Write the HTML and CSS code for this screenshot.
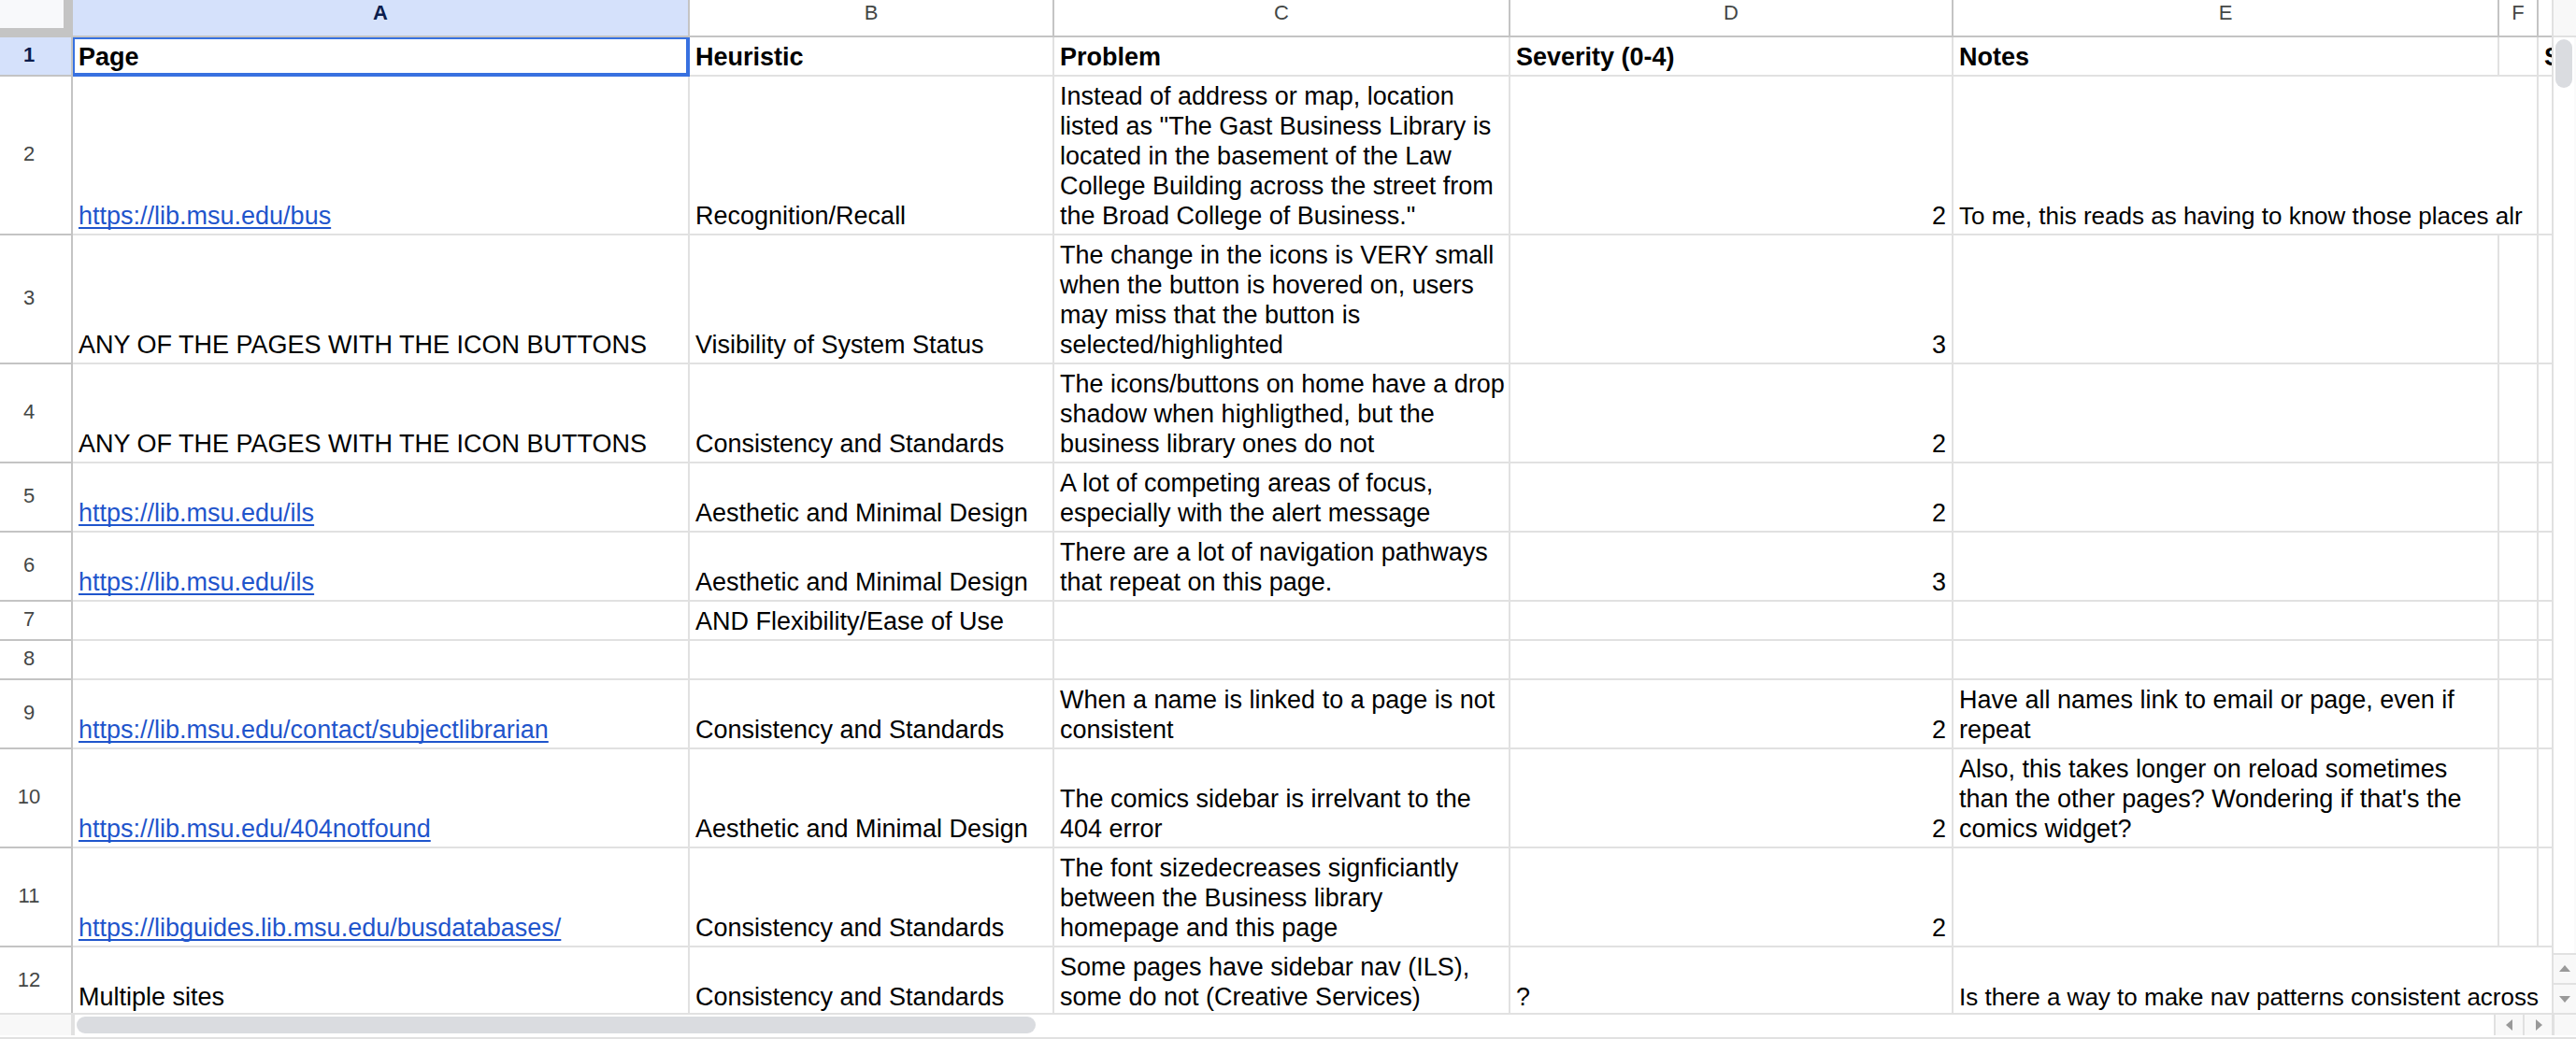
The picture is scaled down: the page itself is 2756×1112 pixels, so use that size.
FILE: index.html
```html
<!DOCTYPE html>
<html lang="en">
<head>
<meta charset="utf-8">
<title>Heuristic evaluation</title>
<link rel="stylesheet" href="styles.css">
</head>
<body>
<div class="app">
  <main class="pane">
    <table class="sheet">
      <colgroup>
        <col class="col-head"><col class="col-a"><col class="col-b"><col class="col-c"><col class="col-d"><col class="col-e"><col class="col-f"><col>
      </colgroup>
      <thead>
        <tr>
          <td class="corner"></td>
          <th scope="col" class="active">A</th>
          <th scope="col">B</th>
          <th scope="col">C</th>
          <th scope="col">D</th>
          <th scope="col">E</th>
          <th scope="col">F</th>
          <th scope="col"></th>
        </tr>
      </thead>
      <tbody>
        <tr class="titles">
          <th scope="row" class="active">1</th>
          <td class="selected">Page</td>
          <td>Heuristic</td>
          <td>Problem</td>
          <td>Severity (0-4)</td>
          <td>Notes</td>
          <td></td>
          <td>S</td>
        </tr>
        <tr>
          <th scope="row">2</th>
          <td><a href="https://lib.msu.edu/bus">https://lib.msu.edu/bus</a></td>
          <td>Recognition/Recall</td>
          <td>Instead of address or map, location listed as "The Gast Business Library is located in the basement of the Law College Building across the street from the Broad College of Business."</td>
          <td class="num">2</td>
          <td colspan="2" class="spill">To me, this reads as having to know those places alr</td>
          <td></td>
        </tr>
        <tr>
          <th scope="row">3</th>
          <td>ANY OF THE PAGES WITH THE ICON BUTTONS</td>
          <td>Visibility of System Status</td>
          <td>The change in the icons is VERY small when the button is hovered on, users may miss that the button is selected/highlighted</td>
          <td class="num">3</td>
          <td></td><td></td><td></td>
        </tr>
        <tr>
          <th scope="row">4</th>
          <td>ANY OF THE PAGES WITH THE ICON BUTTONS</td>
          <td>Consistency and Standards</td>
          <td>The icons/buttons on home have a drop shadow when highligthed, but the business library ones do not</td>
          <td class="num">2</td>
          <td></td><td></td><td></td>
        </tr>
        <tr>
          <th scope="row">5</th>
          <td><a href="https://lib.msu.edu/ils">https://lib.msu.edu/ils</a></td>
          <td>Aesthetic and Minimal Design</td>
          <td>A lot of competing areas of focus, especially with the alert message</td>
          <td class="num">2</td>
          <td></td><td></td><td></td>
        </tr>
        <tr>
          <th scope="row">6</th>
          <td><a href="https://lib.msu.edu/ils">https://lib.msu.edu/ils</a></td>
          <td>Aesthetic and Minimal Design</td>
          <td>There are a lot of navigation pathways that repeat on this page.</td>
          <td class="num">3</td>
          <td></td><td></td><td></td>
        </tr>
        <tr>
          <th scope="row">7</th>
          <td></td>
          <td>AND Flexibility/Ease of Use</td>
          <td></td><td></td><td></td><td></td><td></td>
        </tr>
        <tr>
          <th scope="row">8</th>
          <td></td><td></td><td></td><td></td><td></td><td></td><td></td>
        </tr>
        <tr>
          <th scope="row">9</th>
          <td><a href="https://lib.msu.edu/contact/subjectlibrarian">https://lib.msu.edu/contact/subjectlibrarian</a></td>
          <td>Consistency and Standards</td>
          <td>When a name is linked to a page is not consistent</td>
          <td class="num">2</td>
          <td>Have all names link to email or page, even if repeat</td>
          <td></td><td></td>
        </tr>
        <tr>
          <th scope="row">10</th>
          <td><a href="https://lib.msu.edu/404notfound">https://lib.msu.edu/404notfound</a></td>
          <td>Aesthetic and Minimal Design</td>
          <td>The comics sidebar is irrelvant to the 404 error</td>
          <td class="num">2</td>
          <td>Also, this takes longer on reload sometimes than the other pages? Wondering if that's the comics widget?</td>
          <td></td><td></td>
        </tr>
        <tr>
          <th scope="row">11</th>
          <td><a href="https://libguides.lib.msu.edu/busdatabases/">https://libguides.lib.msu.edu/busdatabases/</a></td>
          <td>Consistency and Standards</td>
          <td>The font sizedecreases signficiantly between the Business library homepage and this page</td>
          <td class="num">2</td>
          <td></td><td></td><td></td>
        </tr>
        <tr>
          <th scope="row">12</th>
          <td>Multiple sites</td>
          <td>Consistency and Standards</td>
          <td>Some pages have sidebar nav (ILS), some do not (Creative Services)</td>
          <td>?</td>
          <td colspan="3" class="spill">Is there a way to make nav patterns consistent across</td>
        </tr>
      </tbody>
    </table>
  </main>
  <div class="vbar">
    <div class="vbar-head"></div>
    <div class="vbar-track"><div class="vbar-thumb"></div></div>
    <button type="button" aria-label="Scroll up"><svg width="12" height="8" viewBox="0 0 12 8"><path d="M6 0 12 7H0z"/></svg></button>
    <button type="button" aria-label="Scroll down"><svg width="12" height="8" viewBox="0 0 12 8"><path d="M6 8 12 1H0z"/></svg></button>
  </div>
  <div class="hbar">
    <div class="hbar-head"></div>
    <div class="hbar-track"><div class="hbar-thumb"></div></div>
    <button type="button" aria-label="Scroll left"><svg width="8" height="12" viewBox="0 0 8 12"><path d="M0 6 7 0V12z"/></svg></button>
    <button type="button" aria-label="Scroll right"><svg width="8" height="12" viewBox="0 0 8 12"><path d="M8 6 1 0V12z"/></svg></button>
  </div>
  <div class="bar-corner"></div>
</div>
</body>
</html>
```

FILE: styles.css
```css
* { box-sizing: border-box; }

:root {
  --grid: #e1e1e1;
  --head: #c4c4c4;
  --bar: #f8f8f8;
  --tint: #d5e1fb;
  --accent: #3871e0;
}

body {
  margin: 0;
  background: #fff;
  color: #000;
  font-family: "Liberation Sans", Arial, sans-serif;
  font-size: 27px;
  line-height: 32px;
}

.app {
  display: grid;
  grid-template-columns: minmax(0, 1fr) 26px;
  grid-template-rows: minmax(0, 1fr) 24px;
  height: 100vh;
  padding-bottom: 2px;
  border-bottom: 2px solid var(--grid);
}

.pane { overflow: hidden; }

/* Cells */
.sheet {
  width: 100%;
  table-layout: fixed;
  border-collapse: separate;
  border-spacing: 0;
}

.col-head { width: 78px; }
.col-a { width: 660px; }
.col-b { width: 390px; }
.col-c { width: 488px; }
.col-d { width: 474px; }
.col-e { width: 584px; }
.col-f { width: 42px; }

.sheet td {
  height: 42px;
  padding: 5px 2px 3px 6px;
  border-right: 2px solid var(--grid);
  border-bottom: 2px solid var(--grid);
  vertical-align: bottom;
  overflow: hidden;
}

.sheet td:last-child { border-right: 0; }
.sheet .num { padding-right: 6px; text-align: right; }
.sheet .spill { font-size: 26px; white-space: nowrap; }
.titles td { font-weight: bold; }

.sheet .selected {
  border-color: var(--accent);
  box-shadow: inset 0 0 0 2px var(--accent);
}

.sheet a {
  color: #1f55cc;
  text-decoration-thickness: 2px;
  text-underline-offset: 3px;
  text-decoration-skip-ink: none;
}

/* Row and column headings */
.sheet th {
  border-right: 2px solid var(--head);
  border-bottom: 2px solid var(--head);
  color: #444746;
  font-size: 22px;
  font-weight: normal;
  line-height: 28px;
}

.sheet thead th { padding: 0 0 10px; }
.sheet thead th:last-child { border-right: 0; }
.sheet tbody th { padding: 0 14px 3px 0; }

.sheet th.active {
  background: var(--tint);
  color: #0b1d4d;
  font-weight: bold;
}

.sheet .corner {
  height: 40px;
  padding: 0;
  border-right: 10px solid var(--head);
  border-bottom: 10px solid var(--head);
  background: #f8f9fb;
}

/* Scroll bars */
button {
  display: flex;
  align-items: center;
  justify-content: center;
  margin: 0;
  padding: 0;
  border: 0;
  background: var(--bar);
}

button svg { fill: #999; }

.vbar {
  display: flex;
  flex-direction: column;
  border-left: 2px solid var(--grid);
}

.vbar-head {
  height: 40px;
  border-bottom: 2px solid var(--grid);
  background: var(--bar);
}

.vbar-track {
  flex: 1;
  padding: 2px;
  border-right: 2px solid #fafafa;
}

.vbar-thumb {
  width: 18px;
  height: 52px;
  border-radius: 9px;
  background: #dadce0;
}

.vbar button { height: 32px; border-top: 2px solid var(--grid); }

.hbar {
  display: flex;
  border-top: 2px solid var(--grid);
}

.hbar-head {
  width: 80px;
  border-right: 4px solid var(--grid);
  background: var(--bar);
}

.hbar-track { flex: 1; padding: 2px; }

.hbar-thumb {
  width: 39.7%;
  height: 18px;
  border-radius: 9px;
  background: #dadce0;
}

.hbar button { width: 31px; border-left: 2px solid var(--grid); }

.bar-corner {
  border-top: 2px solid var(--grid);
  border-left: 3px solid var(--grid);
  background: var(--bar);
}
```
